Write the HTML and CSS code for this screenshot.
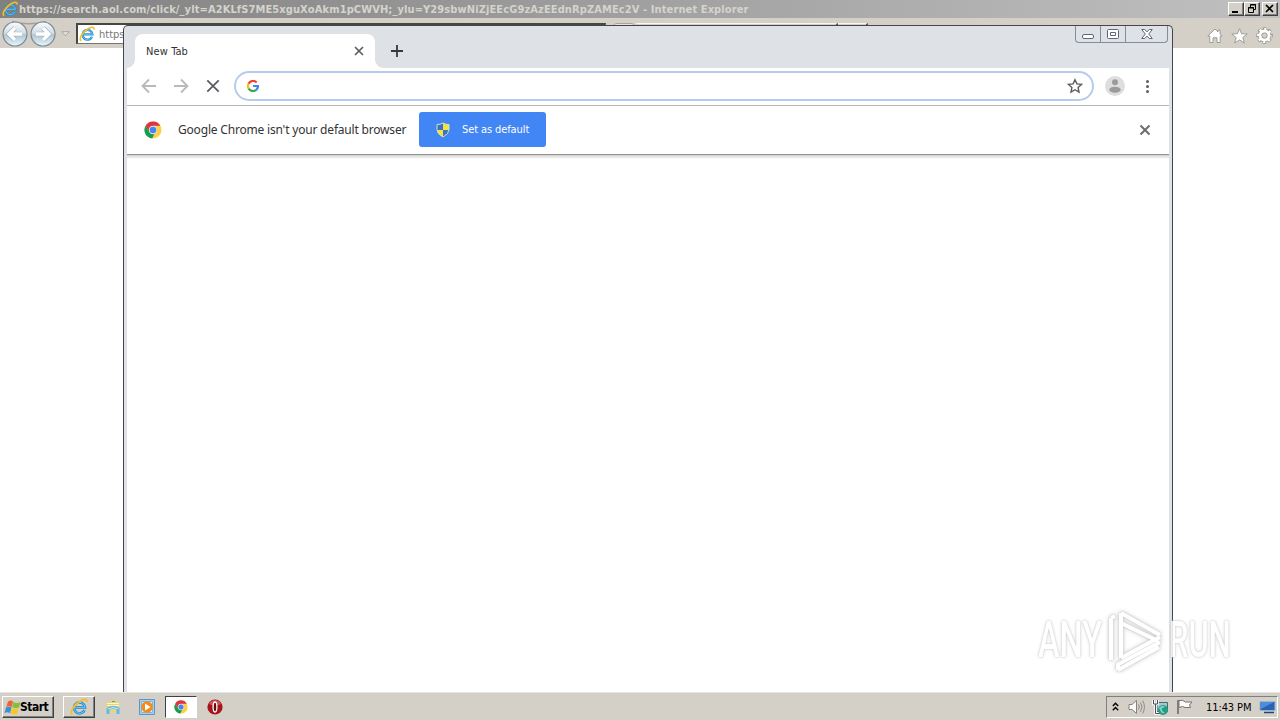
FILE: index.html
```html
<!DOCTYPE html>
<html lang="en">
  <head>
    <meta charset="utf-8" />
    <title>New Tab</title>
    <link rel="stylesheet" href="styles.css" />
  </head>
  <body>
    <!-- shared icons -->
    <svg class="defs" width="0" height="0">
      <symbol id="ie" viewBox="0 0 16 16">
        <path d="M13 10.8A4.9 4.9 0 1 1 13.400 8.300H4.600" fill="none" stroke="#2589cf" stroke-width="2.300" />
        <path d="M13 10.8A4.9 4.9 0 1 1 13.400 8.300H4.600" fill="none" stroke="#7dd3f5" stroke-width=".8" />
        <path d="M2.2 14.7C-.7 13 3.3 6.2 8.7 3 12 1 15.4.2 15 3.6" fill="none" stroke="#f2bf27" stroke-width="1.6" />
      </symbol>
      <symbol id="chrome" viewBox="0 0 18 18">
        <circle cx="9" cy="9" r="8.5" fill="#ffd044" />
        <path d="M1.6 4.7A8.5 8.5 0 0 1 16.4 4.8H9A4.2 4.2 0 0 0 5.1 10.7Z" fill="#df3445" />
        <path d="M1.6 4.7 5.4 11.2A4.2 4.2 0 0 0 10.3 13L8.2 17.5A8.5 8.5 0 0 1 1.6 4.7Z" fill="#179c55" />
        <circle cx="9" cy="9" r="3.9" fill="#e3edfb" />
        <circle cx="9" cy="9" r="3.3" fill="#4285f4" />
      </symbol>
    </svg>

    <div class="desktop">
      <div class="ie-title">
        <svg class="ie-logo"><use href="#ie" /></svg>
        <span class="ie-title-text">https://search.aol.com/click/_ylt=A2KLfS7ME5xguXoAkm1pCWVH;_ylu=Y29sbwNiZjEEcG9zAzEEdnRpZAMEc2V - Internet Explorer</span>
        <div class="ie-controls">
          <span class="ctl"><svg width="14" height="12"><path d="M3 9h6" stroke="#000" stroke-width="2" /></svg></span>
          <span class="ctl"><svg width="14" height="12" fill="none" stroke="#000"><path d="M5.5 4V1.5h5v5H9M5 2h6M3.5 4.5h5v5h-5zM3 5h6" /></svg></span>
          <span class="ctl close"><svg width="14" height="12"><path d="M3 2l7 7M10 2L3 9" stroke="#000" stroke-width="1.7" /></svg></span>
        </div>
      </div>

      <div class="ie-bar">
        <svg class="ie-nav" width="60" height="30" viewBox="0 0 60 30">
          <defs>
            <linearGradient id="orb" x1="0" y1="0" x2="0" y2="1">
              <stop offset="0" stop-color="#fafcfd" />
              <stop offset=".45" stop-color="#d3dee6" />
              <stop offset=".55" stop-color="#b3c6d3" />
              <stop offset="1" stop-color="#e5f8ff" />
            </linearGradient>
          </defs>
          <path d="M12 2.5Q29 7 46 2.5" fill="none" stroke="#a3a19c" stroke-width="1.5" />
          <circle cx="15" cy="15" r="12" fill="url(#orb)" stroke="#7f8b92" stroke-width="1.2" />
          <circle cx="43" cy="15" r="12" fill="url(#orb)" stroke="#7f8b92" stroke-width="1.2" />
          <path d="M22 15H9M15 9l-6 6 6 6M36 15h13M43 9l6 6-6 6" fill="none" stroke="#9fb1bd" stroke-width="4.6" />
          <path d="M22 15H9M15 9l-6 6 6 6M36 15h13M43 9l6 6-6 6" fill="none" stroke="#fff" stroke-width="3.4" />
        </svg>
        <svg class="ie-drop" width="9" height="6"><path d="M.7.7h7.6L4.5 4.8z" fill="#e6e3dd" stroke="#aaa69f" /></svg>
        <div class="ie-address">
          <svg class="ie-logo"><use href="#ie" /></svg>
          <span>https</span>
        </div>
        <div class="ie-stub"></div>
        <div class="ie-tab first"></div>
        <div class="ie-tab"></div>
        <div class="ie-tools">
          <svg width="16" height="16" viewBox="0 0 16 16"><path d="M8 1 .8 8h2v6.5H6V9.8h4v4.7h3.2V8h2L13 5.8V2h-2v2z" fill="#fff" stroke="#99958f" stroke-width=".9" /></svg>
          <svg width="17" height="16" viewBox="0 0 17 16"><path d="M8.5.7l2 5 5.7.3-4.4 3.5 1.5 5.5-4.8-3.1L3.7 15l1.5-5.5L.8 6l5.7-.3z" fill="#fff" stroke="#99958f" stroke-width=".9" /></svg>
          <svg width="17" height="17" viewBox="-8.5 -8.5 17 17">
            <circle r="6.600" fill="none" stroke="#99958f" stroke-width="3.400" stroke-dasharray="3.200 1.984" stroke-dashoffset="1.600" />
            <circle r="4.5" fill="none" stroke="#99958f" stroke-width="4.3" />
            <circle r="6.400" fill="none" stroke="#fff" stroke-width="2.400" stroke-dasharray="2 3.027" stroke-dashoffset="1" />
            <circle r="4.5" fill="none" stroke="#fff" stroke-width="2.8" />
          </svg>
        </div>
      </div>

      <div class="ie-page"></div>

      <div class="taskbar">
        <div class="start">
          <svg width="18" height="17" viewBox="0 0 18 17">
            <path d="M4 2.5q3-2 5 .1L7.7 8Q5 6.5 2.3 7.9z" fill="#ef6331" />
            <path d="M9.500 3q3 1.8 7 0L15 8.4q-3.2 1.5-6.8-.1z" fill="#88bd3b" />
            <path d="M2 8.500q3-1.5 5.5.1L6 14.2q-2.5-1.8-5.5-.1z" fill="#3d8fd4" />
            <path d="M8 9q3 1.8 6.7 0l-1.5 5.800q-3 1.6-6.500-.2z" fill="#f9c629" />
          </svg>
          <span>Start</span>
        </div>
        <div class="task raised"><svg width="18" height="18"><use href="#ie" /></svg></div>
        <div class="task">
          <svg width="16" height="16" viewBox="0 0 16 16">
            <path d="M1 3.500h4l1-2h4l1 1h3v11H1z" fill="#e8d27f" />
            <path d="M2 4.5h12M2 6.5h12" stroke="#fff5c1" />
            <path d="M7 2.5h3" stroke="#4fb35d" />
            <path d="M3 15V10q5-3.500 10 0v5" fill="none" stroke="#62b9e5" stroke-width="3" />
            <path d="M3 10q5-3 10 0" fill="none" stroke="#c1ecfc" />
          </svg>
        </div>
        <div class="task">
          <svg width="16" height="16" viewBox="0 0 16 16">
            <path d="M.5.5h15v15H.5z" fill="#a9d1ef" stroke="#5b96c8" />
            <path d="M2.5 2.5h11v11h-11z" fill="#d9eefb" stroke="#7fb6dd" />
            <circle cx="8" cy="8" r="5.8" fill="#f38b1c" />
            <path d="M6 4.500v7L11.700 8z" fill="#fff" />
          </svg>
        </div>
        <div class="task pressed"><svg width="14" height="14"><use href="#chrome" /></svg></div>
        <div class="task">
          <svg width="16" height="16" viewBox="0 0 16 16">
            <circle cx="8" cy="8" r="7.6" fill="#a8141b" />
            <path d="M2 5a6.7 6.7 0 0 1 12 0Q8 8 2 5" fill="#cf5354" />
            <ellipse cx="8" cy="8" rx="1.900" ry="5" fill="#6f080d" stroke="#fff" stroke-width="1.300" />
          </svg>
        </div>
        <div class="tray">
          <svg width="7" height="10" fill="none" stroke="#000" stroke-width="1.4"><path d="M.8 4l2.7-2.7L6.2 4M.8 8.3l2.7-2.7 2.7 2.7" /></svg>
          <svg width="17" height="16" viewBox="0 0 17 16">
            <path d="M1 5.5h3L8.5 1.4v13L4 10.5H1z" fill="#f9f9f8" stroke="#85837f" />
            <path d="M10.5 5.3q1.7 2.7 0 5.4M12.5 3.3q3 4.7 0 9.4M14.7 1.5q3.5 6.5 0 13" fill="none" stroke="#908e89" />
          </svg>
          <svg width="17" height="17" viewBox="0 0 17 17">
            <path d="M5 3.5h10.5v9H5z" fill="#9fc9d7" stroke="#50626a" />
            <path d="M1.5 1v4h4V1M3.5 5v9.5H8" fill="none" stroke="#fff" stroke-width="2.6" />
            <path d="M1.5 1v4h4V1M3.5 5v9.5H8" fill="none" stroke="#4b5155" />
            <circle cx="11" cy="11" r="5" fill="#279a83" />
            <path d="M7 9q4-4 6-1-4 1-3 3t3 3q-3 1-4-1z" fill="#77d5bb" />
          </svg>
          <svg width="17" height="16" viewBox="0 0 17 16">
            <path d="M3 1.500q4-1 6.500 1.500H16l-2.500 3 1 2.500H9Q7 6.500 3 8.500z" fill="#fbfbfa" stroke="#777570" />
            <path d="M2 1v14" stroke="#777570" stroke-width="1.8" />
          </svg>
          <span class="clock">11:43 PM</span>
          <svg width="17" height="15" viewBox="0 0 17 15">
            <path d="M1 1.5h15v9H1z" fill="#2862b5" stroke="#9bb4d1" />
            <path d="M2 2h13L2 9z" fill="#4d8ed8" />
            <path d="M5 12.5h10" stroke="#244471" stroke-width="1.5" />
          </svg>
        </div>
      </div>

      <div class="window">
        <div class="tab-strip">
          <div class="tab">
            <span>New Tab</span>
            <svg width="10" height="10"><path d="M1 1l8 8M9 1L1 9" stroke="#5a5d61" stroke-width="1.7" /></svg>
          </div>
          <svg class="new-tab" width="12" height="12"><path d="M6 0v12M0 6h12" stroke="#37393d" stroke-width="1.8" /></svg>
          <div class="window-controls">
            <span><svg class="minimize" width="12" height="5"><rect x=".5" y=".5" width="11" height="4" rx="1.5" fill="#fff" stroke="#5f6676" /></svg></span>
            <span><svg width="12" height="10" fill="#fff" stroke="#5f6676"><rect x=".5" y=".5" width="11" height="9" rx="1" /><path d="M3.5 3.5h5v3h-5z" /></svg></span>
            <span class="wide"><svg width="12" height="10" fill="#fff" stroke="#5f6676"><path d="M.7.5h3L6 2.9 8.3.5h3L7.7 5l3.6 4.5h-3L6 7.1 3.7 9.5h-3L4.3 5z" /></svg></span>
          </div>
        </div>

        <div class="toolbar">
          <svg class="nav" width="16" height="16" fill="none" stroke="#b7b9bb" stroke-width="1.8"><path d="M15 8H2M8 1.5L1.5 8 8 14.5" /></svg>
          <svg class="nav" width="16" height="16" fill="none" stroke="#b7b9bb" stroke-width="1.8"><path d="M1 8h13M8 1.5L14.500 8 8 14.5" /></svg>
          <svg class="nav" width="16" height="16" stroke="#5a5d61" stroke-width="1.8"><path d="M2.300 2.300l11.400 11.400M13.700 2.300L2.300 13.700" /></svg>
          <div class="omnibox">
            <svg width="12" height="12" viewBox="0 0 12 12" fill="none" stroke-width="2.200">
              <path d="M9.700 2.500A5 5 0 0 0 1.600 3.700" stroke="#ea4335" />
              <path d="M1.600 3.700a5 5 0 0 0 0 4.700" stroke="#fbbc05" />
              <path d="M1.600 8.400a5 5 0 0 0 7.700 1.400" stroke="#34a853" />
              <path d="M9.300 9.800A5 5 0 0 0 11 6H6" stroke="#4285f4" />
            </svg>
            <svg width="16" height="16" viewBox="0 0 16 16"><path d="M8 1.700l1.900 4.200 4.600.5-3.400 3.100.9 4.500L8 11.700 4 14l.9-4.500L1.500 6.400l4.600-.5z" fill="none" stroke="#5a5d61" stroke-width="1.4" /></svg>
          </div>
          <svg class="avatar" width="20" height="20">
            <circle cx="10" cy="10" r="10" fill="#dedede" />
            <circle cx="10" cy="6.300" r="3" fill="#9b9b9b" />
            <ellipse cx="10" cy="13.700" rx="5.700" ry="3" fill="#9b9b9b" />
          </svg>
          <svg class="menu" width="4" height="14" fill="#5a5d61"><circle cx="2.500" cy="2.500" r="1.500" /><circle cx="2.500" cy="7.500" r="1.500" /><circle cx="2.500" cy="12.500" r="1.500" /></svg>
        </div>

        <div class="infobar">
          <svg width="18" height="18"><use href="#chrome" /></svg>
          <span class="message">Google Chrome isn't your default browser</span>
          <div class="default-button">
            <svg width="14" height="16" viewBox="0 0 14 16">
              <path d="M7 1q3 1.800 6 1.500v5Q13 12 7 15 1 12 1 7.500v-5Q4 2.800 7 1" fill="#3574c8" />
              <path d="M7 1q3 1.800 6 1.500V8H7zM7 8v7Q1 12 1 8z" fill="#f5e43b" />
              <path d="M7 1q3 1.800 6 1.500v5Q13 12 7 15 1 12 1 7.500v-5Q4 2.800 7 1" fill="none" stroke="#d8dfc2" />
            </svg>
            <span>Set as default</span>
          </div>
          <svg class="dismiss" width="12" height="12"><path d="M1.500 1.500l9 9M10.500 1.500l-9 9" stroke="#6b6d70" stroke-width="2" /></svg>
        </div>
        <div class="content"></div>
      </div>

      <div class="watermark">
        <span class="any">ANY</span>
        <svg width="62" height="68" viewBox="0 0 62 68" fill="none" stroke-linejoin="round">
          <path class="mark" d="M6 12v42M6 12l4-2M16 7v45M16 7l39 22M16 17l37 18M16 52l39-21M12 59l43-23M13 64l41-23M13 58v6" />
        </svg>
        <span class="run">RUN</span>
      </div>
    </div>
  </body>
</html>
```
FILE: styles.css
```css
* {
  margin: 0;
  padding: 0;
  box-sizing: border-box;
}

body {
  width: 1280px;
  height: 720px;
  overflow: hidden;
  font-family: "DejaVu Sans Condensed", "DejaVu Sans", sans-serif;
  font-size: 11px;
}

svg {
  flex-shrink: 0;
}

.defs {
  position: absolute;
}

.desktop {
  position: relative;
  height: 720px;
  display: flex;
  flex-direction: column;
  background: #fff;
}

/* Internet Explorer */
.ie-title {
  height: 18px;
  display: flex;
  align-items: center;
  padding: 0 2px;
  background: linear-gradient(90deg, #808080, #c0c0c0);
}

.ie-logo {
  width: 16px;
  height: 16px;
}

.ie-title-text {
  margin-left: 1px;
  color: #d6d3cc;
  font-weight: bold;
  white-space: nowrap;
  letter-spacing: 0.107px;
}

.ie-controls {
  display: flex;
  margin-left: auto;
}

.ctl {
  width: 16px;
  height: 14px;
  background: #d4d0c8;
  border: 1px solid;
  border-color: #fff #404040 #404040 #fff;
  box-shadow: inset -1px -1px #808080;
}

.ctl svg {
  display: block;
}

.ctl.close {
  margin-left: 2px;
}

.ie-bar {
  height: 30px;
  display: flex;
  align-items: center;
  background: #d4d0c8;
}

.ie-nav {
  margin-top: 1px;
}

.ie-drop {
  margin: 2px 6px 0 1px;
}

.ie-address {
  width: 530px;
  height: 21px;
  display: flex;
  align-items: center;
  margin-top: 1px;
  padding-left: 1px;
  background: #fff;
  border: 1px solid #77736d;
  border-top: 2px solid #464642;
  border-left: 2px solid #464642;
  color: #777;
}

.ie-address span {
  margin-left: 4px;
}

.ie-stub {
  width: 24px;
  height: 20px;
  margin-left: 6px;
  border: 1px solid #a7a39c;
  border-radius: 5px;
  background: #e6e3de;
}

.ie-tab {
  width: 30px;
  height: 20px;
  border-top: 1px solid #f7f7f0;
  border-right: 2px solid #555;
}

.ie-tab.first {
  width: 202px;
}

.ie-tools {
  display: flex;
  align-items: center;
  gap: 8px;
  margin: 5px 7px 0 auto;
}

.ie-page {
  flex: 1;
}

/* taskbar */
.taskbar {
  height: 28px;
  display: flex;
  align-items: center;
  padding: 2px 2px 0;
  background: #d4d0c8;
  box-shadow: inset 0 1px #e7e5df;
}

.start {
  width: 52px;
  height: 22px;
  display: flex;
  align-items: center;
  padding-left: 1px;
  border: 1px solid;
  border-color: #fff #404040 #404040 #fff;
  box-shadow: inset -1px -1px #808080;
  font-size: 12px;
  font-weight: bold;
}

.start span {
  margin-left: -2px;
  letter-spacing: -0.5px;
}

.task {
  width: 32px;
  height: 22px;
  display: flex;
  align-items: center;
  justify-content: center;
  margin-right: 2px;
}

.raised {
  margin-left: 9px;
  border: 1px solid;
  border-color: #fff #404040 #404040 #fff;
  box-shadow: inset -1px -1px #808080;
}

.pressed {
  background: #fff;
  border: 1px solid;
  border-color: #404040 #fff #fff #404040;
}

.tray {
  width: 172px;
  height: 22px;
  display: flex;
  align-items: center;
  gap: 7px;
  margin-left: auto;
  padding-left: 5px;
  border: 1px solid;
  border-color: #808080 #fff #fff #808080;
}

.tray svg:nth-child(2) {
  margin-left: 2px;
}

.clock {
  width: 46px;
  margin: 0 0 0 6px;
  white-space: nowrap;
  letter-spacing: -0.1px;
}

/* browser window */
.window {
  position: absolute;
  left: 123px;
  top: 25px;
  width: 1050px;
  height: 667px;
  display: flex;
  flex-direction: column;
  padding: 0 3px;
  background: #dee1e6;
  border: 1px solid #44464a;
  border-bottom: 0;
  border-radius: 5px 5px 0 0;
}

.tab-strip {
  height: 42px;
  display: flex;
  align-items: flex-end;
}

.tab {
  position: relative;
  width: 240px;
  height: 34px;
  display: flex;
  align-items: center;
  justify-content: space-between;
  margin-left: 8px;
  padding: 0 11px;
  background: #fff;
  border-radius: 8px 8px 0 0;
  color: #333;
}

.tab span {
  letter-spacing: 0.1px;
}

.tab::before,
.tab::after {
  content: "";
  position: absolute;
  bottom: 0;
  width: 8px;
  height: 8px;
}

.tab::before {
  left: -8px;
  background: radial-gradient(circle at 0 0, transparent 7.5px, #fff 8px);
}

.tab::after {
  right: -8px;
  background: radial-gradient(circle at 100% 0, transparent 7.5px, #fff 8px);
}

.new-tab {
  margin: 0 0 11px 16px;
}

.window-controls {
  display: flex;
  align-self: flex-start;
  height: 17px;
  margin: 0 1px 0 auto;
  border: 1px solid #858b98;
  border-top: 0;
  border-radius: 0 0 4px 4px;
}

.window-controls span {
  width: 25px;
  display: flex;
  align-items: center;
  justify-content: center;
  border-right: 1px solid #858b98;
}

.window-controls .wide {
  width: 41px;
  border-right: 0;
}

.minimize {
  margin-top: 5px;
}

.toolbar {
  height: 38px;
  display: flex;
  align-items: center;
  padding: 0 20px 1px 14px;
  background: #fff;
  border-bottom: 1px solid #b6b6b6;
}

.nav {
  margin-right: 16px;
}

.omnibox {
  flex: 1;
  height: 30px;
  display: flex;
  align-items: center;
  justify-content: space-between;
  margin-left: -3px;
  padding: 0 9px 0 11px;
  border: 2px solid #b6cbed;
  border-radius: 15px;
}

.avatar {
  margin-left: 11px;
}

.menu {
  margin-left: 20px;
}

.infobar {
  height: 49px;
  display: flex;
  align-items: center;
  padding: 0 18px 0 17px;
  background: #fff;
  border-bottom: 1px solid #929292;
}

.message {
  width: 228px;
  margin: -2px 0 0 16px;
  font-family: "Noto Sans", sans-serif;
  font-size: 12px;
  letter-spacing: -0.19px;
  white-space: nowrap;
  color: #333;
}

.default-button {
  width: 127px;
  height: 35px;
  display: flex;
  align-items: center;
  margin: -1px 0 0 13px;
  padding-left: 17px;
  background: #4285f4;
  border-radius: 3px;
  color: #fff;
}

.default-button span {
  margin-left: 12px;
  letter-spacing: -0.1px;
}

.dismiss {
  margin-left: auto;
}

.content {
  flex: 1;
  background: linear-gradient(#d0d0d0, #fff 4px);
}

/* watermark over the desktop */
.watermark {
  position: absolute;
  left: 1038px;
  top: 606px;
  display: flex;
  align-items: center;
  opacity: 0.85;
  color: #fff;
  font-family: Roboto, sans-serif;
  font-size: 50px;
  font-weight: 500;
  line-height: 68px;
  text-shadow: 0 0 2px #bbb, 0 0 4px #ccc;
}

.any,
.run {
  width: 67px;
  transform: scaleX(0.65);
  transform-origin: left;
}

.run {
  margin-left: 2px;
  transform: scaleX(0.62);
}

.mark {
  stroke: #fff;
  stroke-width: 4px;
  filter: drop-shadow(0 0 1px #bbb) drop-shadow(0 0 2px #ccc);
}
```
